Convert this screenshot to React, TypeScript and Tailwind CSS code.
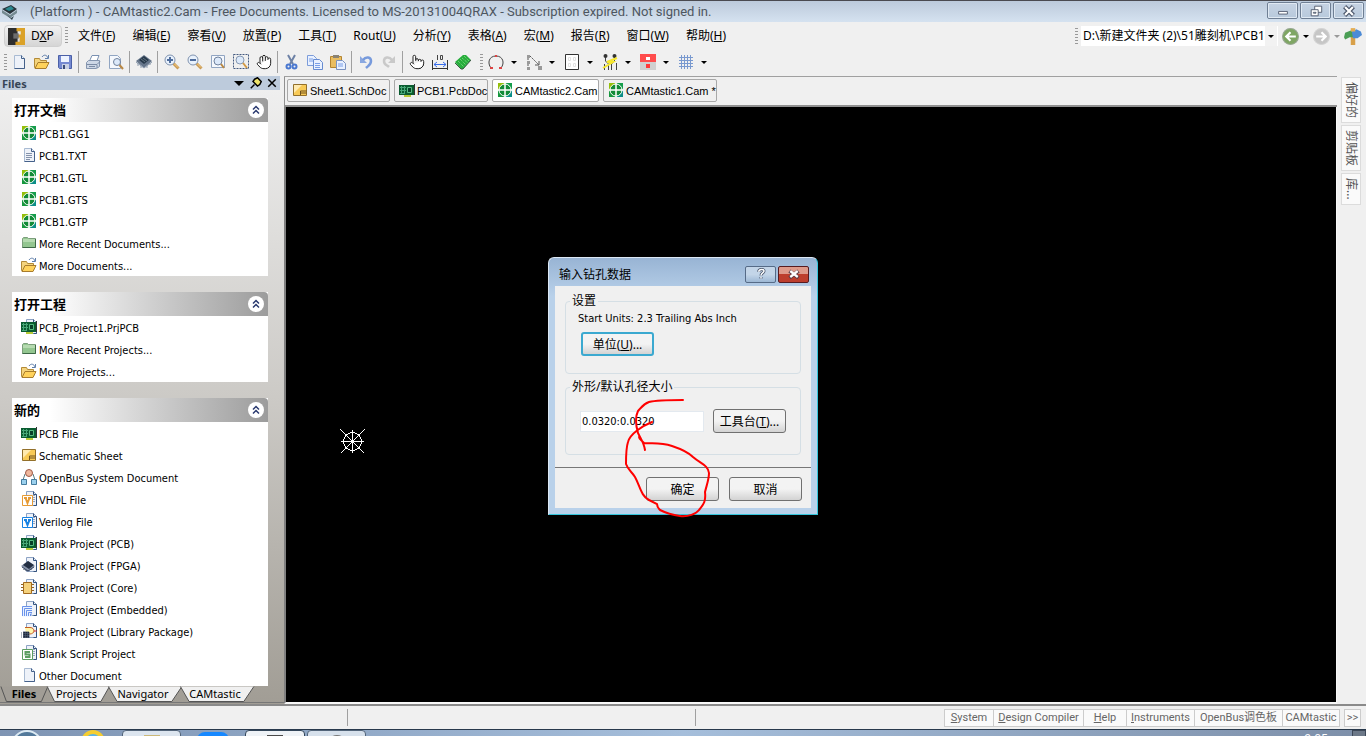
import type { ReactNode } from "react";
import { Hand, Pointer } from "lucide-react";

const ui = "font-['Noto_Sans','Noto_Sans_CJK_SC',sans-serif]";
const tahoma = "font-['DejaVu_Sans_Condensed','Noto_Sans_CJK_SC',sans-serif]";
const arial = "font-['Liberation_Sans','Noto_Sans_CJK_SC',sans-serif]";

const Svg = ({ children, className = "w-4 h-4" }: { children: ReactNode; className?: string }) => (
  <svg viewBox="0 0 16 16" className={`${className} shrink-0`} fill="none" aria-hidden="true">
    {children}
  </svg>
);

const Page = ({ lines = false }: { lines?: boolean }) => (
  <>
    <path d="M3.5 1.5h7l3 3v10h-10z" fill="#eef2f9" stroke="#a9bbd3" />
    <path d="M10.5 1.5v3h3v10h-10" stroke="#45618a" />
    {lines && <path d="M5 6.5h6M5 8.5h6M5 10.5h6M5 12.5h4" stroke="#8492ab" />}
  </>
);

const BackPage = () => (
  <>
    <path d="M5.5.5h7l3 3v11h-10z" fill="#eef2f9" stroke="#8da3c4" />
    <path d="M12.5.5v3h3v11h-3" stroke="#34537e" />
  </>
);

const Board = () => (
  <>
    <path d="M0 3h15v10H0z" fill="#0a5c30" />
    <path d="M5 13h7v2H5z" fill="#b5c936" />
    <path d="M1 5.500h6M1 8.500h6M1 11.500h5M2.500 4v8M5.500 4v8" stroke="#48a878" />
    <path d="M8.500 5.500h4v5h-4z" fill="#083f28" stroke="#56ba80" />
    <path d="M15.500 2v11" stroke="#333" />
  </>
);

const Lens = ({ sign }: { sign?: string }) => (
  <>
    <path d="M9.500 9.500l5 5" stroke="#c99a55" strokeWidth="3" />
    <path d="M10 9.500l4 4" stroke="#f7cf83" />
    <circle cx="6" cy="6" r="5" fill="#e8f1fc" stroke="#8093af" />
    {sign && <path d={sign} stroke="#4f6d9d" strokeWidth="2" />}
  </>
);

const Folder = () => (
  <>
    <path d="M.5 13.500v-9h5l1 2h6v7z" fill="#f5d47c" stroke="#b28a38" />
    <path d="M1 14.500l3-6h11l-3 6z" fill="#ffd25b" stroke="#a87c2c" />
    <path d="M8 3c2-3 5-2 6 1M14.500 1v3.500H11" stroke="#5e7eaa" />
  </>
);

const FrontBadge = ({ color, d }: { color: string; d: string }) => (
  <>
    <BackPage />
    <path d="M12 4.500h2M12 6.500h2M12 8.500h2M12 10.500h2" stroke="#96a5be" />
    <path d="M1.500 4.500h10v10h-10z" fill="#fff" stroke={color} />
    <path d={d} stroke={color} strokeWidth="2" />
  </>
);

const icons: Record<string, ReactNode> = {
  cam: (
    <>
      <path d="M1 1h7v7H1z" fill="#94bf0b" />
      <path d="M8 1h7v7H8z" fill="#159d4b" />
      <path d="M1 8h7v7H1z" fill="#16983e" />
      <path d="M8 8h7v7H8z" fill="#0b8e87" />
      <circle cx="8" cy="8" r="6" fill="#128b37" stroke="#fff" />
      <path d="M8 1v14M1 8h14" stroke="#fff" strokeWidth="1.500" />
    </>
  ),
  page: <Page />,
  text: <Page lines />,
  green: (
    <>
      <path d="M1.500 12.500v-9l1-1h4l1 1h7v9z" fill="#93c690" stroke="#7c9f7c" />
      <path d="M14.500 4v8.500h-13" stroke="#3e6946" />
      <path d="M2 4h12v3H2z" fill="#b5dab0" />
    </>
  ),
  folder: <Folder />,
  board: <Board />,
  boardPage: (
    <>
      <BackPage />
      <Board />
    </>
  ),
  sheet: (
    <>
      <path d="M1.500 2.500h13v11h-13z" fill="#f8ca56" stroke="#93702b" />
      <path d="M2 3h8L2 11z" fill="#ffeab0" />
      <path d="M8.500 13v-4h6M8.500 11h6" stroke="#6f511e" />
    </>
  ),
  bus: (
    <>
      <path d="M4 5L2 11M12 5l2 6M6 4h4" stroke="#547c83" />
      <circle cx="8" cy="4" r="3.500" fill="#efb79d" stroke="#9f5944" />
      <path d="M.5 10.500h5v5h-5zM10.500 10.500h5v5h-5z" fill="#9bd0ed" stroke="#447b9d" />
    </>
  ),
  vhdl: <FrontBadge color="#e69b35" d="M3 7h3M7 7h3M4.500 7l2 5 2-5" />,
  verilog: <FrontBadge color="#1682e3" d="M3 7h3M7 7h3M4.500 7l2 5 2-5" />,
  script: <FrontBadge color="#5d9e62" d="M9 7H4.500v2.500h4V12H4" />,
  fpga: (
    <>
      <BackPage />
      <path d="M0 9l7-5 7 5-7 6z" fill="#8793a9" />
      <path d="M2 8l5-4 6 4-5 4z" fill="#232f43" />
      <path d="M1 10l6 4 6-4M3 12v1M5 13v1M10 12v1" stroke="#34445f" />
    </>
  ),
  core: (
    <>
      <BackPage />
      <path d="M0 5.500h13M0 8.500h13M0 11.500h13" stroke="#8f6423" />
      <path d="M2.500 3.500h8v11h-8z" fill="#f5d27c" stroke="#a36a1e" />
    </>
  ),
  embedded: (
    <>
      <BackPage />
      <path d="M1.500 5.500h9v10h-9z" fill="#e9f2ff" />
      <path d="M1.500 15V5.500H11M3.500 15V7.500H11M5.500 15V9.500H11M7.500 15v-3.500H11M9.500 15v-2H11" stroke="#6b93ea" />
    </>
  ),
  library: (
    <>
      <BackPage />
      <path d="M4 4.500h5c3 0 4 2 4 3.500s-2 3-4 3H5" fill="#fff5ad" stroke="#c65e23" />
      <path d="M13 8h3" stroke="#c33" />
      <path d="M2 9h6v6H2z" fill="#1e293b" />
      <path d="M0 10h10M0 12h10M0 14h10M3 8v8M5 8v8M7 8v8" stroke="#57647a" strokeDasharray="1 1" />
    </>
  ),
  save: (
    <>
      <path d="M1.500 1.500h13v13h-12l-1-1z" fill="#7589d1" stroke="#4b60a7" />
      <path d="M4 2h8v6H4z" fill="#edf3ff" />
      <path d="M5 10h7v5H5z" fill="#c8d0e4" />
      <path d="M6 11h2v4H6z" fill="#394b78" />
    </>
  ),
  print: (
    <>
      <path d="M4.500 7L7 1.500h7L11.500 8" fill="#fff" stroke="#7a91b2" />
      <path d="M1.500 8.500l2-2h11v6l-3 2h-10z" fill="#cdd7e6" stroke="#8394ae" />
      <path d="M2 10.500h10l3-3M4 12.500h6M12 11v3" stroke="#7b8ba5" />
    </>
  ),
  preview: (
    <>
      <path d="M1.500 1.500h8l3 3v10h-11z" fill="#f5f8fd" stroke="#91a5c2" />
      <circle cx="9" cy="8" r="3.500" fill="#dce9fa" stroke="#70829d" />
      <path d="M11.500 11l3.500 4" stroke="#b98844" strokeWidth="2" />
    </>
  ),
  chip: (
    <>
      <path d="M0 7l8-6 8 6-8 7z" fill="#65758a" />
      <path d="M3 6l5-4 5 4-5 4z" fill="#26384a" />
      <path d="M0 8l8 6 8-6M2 9v3M5 11v3M11 12v2M14 9v2" stroke="#8c9bae" />
      <path d="M5 5l4 3M7 4l4 3" stroke="#60727f" />
    </>
  ),
  zoomIn: <Lens sign="M3 6h6M6 3v6" />,
  zoomOut: <Lens sign="M3 6h6" />,
  zoomPage: (
    <>
      <path d="M1.500 1.500h13v12h-13z" fill="#f5f8fd" stroke="#91a5c2" />
      <circle cx="8" cy="7" r="4" fill="#dce9fa" stroke="#70829d" />
      <path d="M11 10l3 4" stroke="#b98844" strokeWidth="2" />
    </>
  ),
  zoomArea: (
    <>
      <path d="M.5.5h15v14H.5z" stroke="#445a80" strokeDasharray="2 1" />
      <circle cx="7" cy="6" r="4" fill="#dce9fa" stroke="#8799b3" />
      <path d="M10 9l4 5" stroke="#d49b45" strokeWidth="2" />
    </>
  ),
  cut: (
    <>
      <path d="M4 1l5 9M11 1L6 10" stroke="#6e82a6" strokeWidth="2" />
      <circle cx="4.500" cy="12.500" r="2" stroke="#4a78d0" strokeWidth="2" />
      <circle cx="10.500" cy="12.500" r="2" stroke="#4a78d0" strokeWidth="2" />
    </>
  ),
  copy: (
    <>
      <path d="M.5 1.500h6l3 3v7h-9z" fill="#e9f1ff" stroke="#7c9cda" />
      <path d="M6.500 5.500h6l3 3v7h-9z" fill="#e9f1ff" stroke="#668bd0" />
      <path d="M2 5h4M2 7h4M8 9.500h5M8 11.500h5M8 13.500h5" stroke="#7a9fe8" />
    </>
  ),
  paste: (
    <>
      <path d="M.5 2.500h11v11H.5z" fill="#e9bd61" stroke="#b48531" />
      <path d="M3 1h6v3H3z" fill="#8a8374" />
      <path d="M6.500 6.500h6l3 3v6h-9z" fill="#e9f1ff" stroke="#7a92c0" />
      <path d="M8 10h5M8 12h5" stroke="#7a9fe8" />
    </>
  ),
  undo: (
    <>
      <path d="M2 2v7h7z" fill="#8aa8e0" />
      <path d="M5 6c3-4 8-3 8 1 0 4-3 5-5 7" stroke="#779adc" strokeWidth="2.500" />
    </>
  ),
  redo: (
    <>
      <path d="M14 2v7H7z" fill="#c9c9c9" />
      <path d="M11 6C8 2 3 3 3 7c0 4 3 4 5 6" stroke="#c9c9c9" strokeWidth="2.500" />
    </>
  ),
  measure: (
    <>
      <path d="M.5 6v10M15.500 6v10M.5 14.500h15" stroke="#333" />
      <path d="M2 10.500h12M5 8l-3 2.500L5 13M11 8l3 2.500L11 13" stroke="#376ceb" />
      <path d="M5.500 1v5M8.500 1.500h2v4h-2z" stroke="#444" />
    </>
  ),
  pad: (
    <>
      <path d="M0 8l8-7h3l5 5-8 9H6z" fill="#27ad3c" />
      <path d="M0 9l6 6h2l8-9" stroke="#3c5a44" />
      <path d="M3 7l6 6M5 5l6 6M7 4l6 5M9 2l5 5" stroke="#8be08b" strokeDasharray="1 1" />
    </>
  ),
  arc: (
    <>
      <path d="M3 14C-1 9 1 2 8 2s9 7 5 12" stroke="#444" />
      <path d="M2 13h3v2H2zM11 13h3v2h-3zM7 1h2v2H7z" fill="#d44" />
    </>
  ),
  nodes: (
    <>
      <path d="M2 4v9M4 2l9 9" stroke="#555" strokeDasharray="2 1" />
      <path d="M13 7v4H9" stroke="#555" />
      <path d="M1 1h3v3H1zM1 7h3v3H1zM1 13h3v3H1zM12 12h4v4h-4z" fill="#999" />
    </>
  ),
  array: (
    <>
      <path d="M1.500.5h13v15h-13z" fill="#fff" stroke="#333" />
      <path d="M4.500 3.500h2v3h-2zM9.500 3.500h2v3h-2zM4.500 9.500h2v3h-2zM9.500 9.500h2v3h-2z" stroke="#e2e2e2" />
    </>
  ),
  route: (
    <>
      <path d="M3.500 2v5l3 3v6M12.500 2v5l-3 3v6M14.500 9v7M2.500 10v6" stroke="#444" />
      <circle cx="3.500" cy="2" r="2" fill="#333" />
      <circle cx="12.500" cy="2" r="2" fill="#333" />
      <path d="M15 4L5 8h6L1 14" stroke="#f6e72d" strokeWidth="2" />
    </>
  ),
  layer: (
    <>
      <path d="M0 0h16v8H0z" fill="#ff4d4d" />
      <path d="M0 8h16v8H0z" fill="#d0d0d0" />
      <path d="M6 3h4v3H6z" fill="#fff" />
      <path d="M6 10h4v4H6z" fill="#ff3838" />
    </>
  ),
  grid: <path d="M3.500 1v14M6.500 1v14M9.500 1v14M12.500 1v14M1 3.500h14M1 6.500h14M1 9.500h14M1 12.500h14" stroke="#7999cf" />,
};

const Icon = ({ name }: { name: string }) => {
  if (name === "hand") return <Hand strokeWidth={1.5} className="h-4 w-4 fill-white text-[#222]" />;
  if (name === "point") return <Pointer strokeWidth={1.5} className="h-4 w-4 fill-white text-[#222]" />;
  return <Svg>{icons[name]}</Svg>;
};

const Arrow = ({ className = "border-t-black" }: { className?: string }) => (
  <span className={`border-x-3 border-t-3 border-x-transparent ${className}`} />
);

const Grip = ({ className = "" }: { className?: string }) => (
  <span
    className={`w-[3px] shrink-0 bg-[repeating-linear-gradient(#999_0_1px,transparent_1px_3px)] ${className}`}
  />
);

const menus = [
  ["文件", "F"],
  ["编辑", "E"],
  ["察看", "V"],
  ["放置", "P"],
  ["工具", "T"],
  ["Rout", "U"],
  ["分析", "Y"],
  ["表格", "A"],
  ["宏", "M"],
  ["报告", "R"],
  ["窗口", "W"],
  ["帮助", "H"],
];

const toolGroups = [
  ["page", "folder", "save"],
  ["print", "preview"],
  ["chip"],
  ["zoomIn", "zoomOut", "zoomPage", "zoomArea", "hand"],
  ["cut", "copy", "paste"],
  ["undo", "redo"],
  ["point", "measure", "pad"],
];

const dropTools = ["arc", "nodes", "array", "route", "layer", "grid"];

const sections = [
  {
    title: "打开文档",
    items: [
      ["cam", "PCB1.GG1"],
      ["text", "PCB1.TXT"],
      ["cam", "PCB1.GTL"],
      ["cam", "PCB1.GTS"],
      ["cam", "PCB1.GTP"],
      ["green", "More Recent Documents..."],
      ["folder", "More Documents..."],
    ],
  },
  {
    title: "打开工程",
    items: [
      ["boardPage", "PCB_Project1.PrjPCB"],
      ["green", "More Recent Projects..."],
      ["folder", "More Projects..."],
    ],
  },
  {
    title: "新的",
    items: [
      ["board", "PCB File"],
      ["sheet", "Schematic Sheet"],
      ["bus", "OpenBus System Document"],
      ["vhdl", "VHDL File"],
      ["verilog", "Verilog File"],
      ["boardPage", "Blank Project (PCB)"],
      ["fpga", "Blank Project (FPGA)"],
      ["core", "Blank Project (Core)"],
      ["embedded", "Blank Project (Embedded)"],
      ["library", "Blank Project (Library Package)"],
      ["script", "Blank Script Project"],
      ["page", "Other Document"],
    ],
  },
];

const docTabs = [
  ["sheet", "Sheet1.SchDoc", "w-[103px]"],
  ["board", "PCB1.PcbDoc", "w-[94px]"],
  ["cam", "CAMtastic2.Cam", "w-[107px]"],
  ["cam", "CAMtastic1.Cam *", "w-[114px]"],
];

const statusButtons = [
  ["S", "ystem", "w-[50px]"],
  ["D", "esign Compiler", "w-[91px]"],
  ["H", "elp", "w-[44px]"],
  ["I", "nstruments", "w-[69px]"],
  ["", "OpenBus调色板", "w-[89px]"],
  ["", "CAMtastic", "w-[58px]"],
];

const TitleBar = () => (
  <header className="flex h-[22px] shrink-0 items-center border-t border-[#4a4a50] bg-linear-to-b from-[#bccadb] to-[#d5e2f0] pr-0.5 pl-0.5">
    <Svg>
      <path d="M0 5l9-4 6 4-7 5z" fill="#28333a" />
      <path d="M3 5l6-3 3 3-5 2z" fill="#2b8990" />
      <path d="M0 6l8 5 7-5v3l-7 5-8-5z" fill="#758a91" />
      <path d="M5 11l4 3 3-2-2 4z" fill="#30424b" />
    </Svg>
    <h1 className="ml-3 grow text-[13px] leading-5 text-[#4d5660] font-['Roboto',sans-serif]">
      (Platform ) - CAMtastic2.Cam - Free Documents. Licensed to MS-20131004QRAX - Subscription expired. Not signed in.
    </h1>
    <div className="flex gap-0.5 self-start pt-px">
      {["minimize", "restore", "close"].map((name) => (
        <button
          key={name}
          aria-label={name}
          className="flex h-[17px] w-[31px] items-center justify-center rounded-[2px] border border-[#6f7f94] bg-linear-to-b from-[#c6d3e3] to-[#b8c9dc] outline outline-offset-[-2px] outline-[#e0e9f3]"
        >
          <Svg className="h-3.5 w-3.5">
            {name === "minimize" && <path d="M3 8.500h10v3H3z" fill="#fff" stroke="#4b5569" />}
            {name === "restore" && (
              <>
                <path d="M6.500 2.500h8v7h-8z" fill="#fff" stroke="#4b5569" />
                <path d="M2.500 6.500h8v7h-8z" fill="#fff" stroke="#4b5569" />
                <path d="M5 9.500h3v1H5z" stroke="#4b5569" />
              </>
            )}
            {name === "close" && (
              <>
                <path d="M3 3l10 10M13 3L3 13" stroke="#4b5569" strokeWidth="5" />
                <path d="M3.500 3.500l9 9M12.500 3.500l-9 9" stroke="#fff" strokeWidth="2.500" />
              </>
            )}
          </Svg>
        </button>
      ))}
    </div>
  </header>
);

const MenuBar = () => (
  <nav className={`flex h-[26px] shrink-0 items-center pt-0.5 pl-1 text-[12px] text-black ${ui}`}>
    <button className="flex h-[22px] w-[58px] items-center gap-1.5 rounded-sm border border-[#d0d0d0] bg-linear-to-b from-[#f2f2f2] to-[#d5d5d5] pl-[3px]">
      <Svg className="h-[17px] w-[17px]">
        <path d="M0 0h9v16H0z" fill="#2e2e2e" />
        <path d="M8 0h8v16H7v-3h4V9H9V6h3V3H8z" fill="#dba228" />
        <path d="M5 5h5v5H5z" fill="#6d6d6d" />
      </Svg>
      <span>
        D<u>X</u>P
      </span>
    </button>
    <Grip className="ml-[3px] h-[18px]" />
    <div className="ml-[10px] flex grow gap-[17px]">
      {menus.map(([label, key]) => (
        <button key={key} className="whitespace-nowrap">
          {label}(<u>{key}</u>)
        </button>
      ))}
    </div>
    <Grip className="h-[17px]" />
    <div className="ml-[3px] flex h-5 w-[197px] items-center bg-white">
      <input
        aria-label="Path"
        className="w-[184px] min-w-0 bg-transparent pl-0.5 outline-none"
        defaultValue="D:\新建文件夹 (2)\51雕刻机\PCB1.GG1"
      />
      <button aria-label="Path list" className="flex h-full w-3 items-center justify-center bg-[#f2f2f2]">
        <Arrow />
      </button>
    </div>
    <div className="flex items-center pr-1 pl-1">
      <button aria-label="Back" className="flex items-center gap-1">
        <Svg className="h-[17px] w-[17px]">
          <circle cx="8" cy="8" r="7.500" fill="#7fa664" stroke="#9aa895" />
          <path d="M13 8H5M8 4L4 8l4 4" stroke="#fff" strokeWidth="2" />
        </Svg>
        <Arrow />
      </button>
      <button aria-label="Forward" className="ml-1 flex items-center gap-1">
        <Svg className="h-[17px] w-[17px]">
          <circle cx="8" cy="8" r="7.500" fill="#c6c6c6" stroke="#d4d4d4" />
          <path d="M3 8h8M8 4l4 4-4 4" stroke="#fff" strokeWidth="2" />
        </Svg>
        <Arrow className="border-t-[#999]" />
      </button>
      <button aria-label="Home" className="ml-1">
        <Svg className="h-[18px] w-[18px]">
          <path d="M6 6h4v10H6z" fill="#d8a049" />
          <path d="M0 9l1-4 5-2 3 2v4H5L1 11z" fill="#4b9e55" />
          <path d="M7 4l4-2 4 2 1 3-4 3H8z" fill="#4d8bd6" />
          <path d="M6 1h4v3H6z" fill="#e4ad53" />
        </Svg>
      </button>
    </div>
  </nav>
);

const ToolBar = () => (
  <div className="flex h-7 shrink-0 items-center pl-1">
    <Grip className="h-[17px]" />
    {toolGroups.map((group, i) => (
      <div key={group[0]} className="flex items-center">
        {i > 0 && <span className="mx-0.5 h-[22px] w-px bg-[#a0a0a0]" />}
        {group.map((name) => (
          <button key={name} aria-label={name} className="flex w-[23px] justify-center">
            <Icon name={name} />
          </button>
        ))}
      </div>
    ))}
    <Grip className="mr-0.5 ml-1.5 h-[17px]" />
    {dropTools.map((name) => (
      <button key={name} aria-label={name} className="flex w-[38px] items-center pl-[3px]">
        <Icon name={name} />
        <span className="flex w-5 justify-center">
          <Arrow />
        </span>
      </button>
    ))}
  </div>
);

const FilesPanel = () => (
  <aside className={`flex w-[284px] shrink-0 flex-col text-[11px] text-black ${tahoma}`}>
    <div className="flex h-3.5 w-[280px] items-center bg-[#bdcbdc] pr-0.5 pl-0.5">
      <h2 className={`grow pt-0.5 leading-3 font-bold text-[#364556] ${ui}`}>Files</h2>
      <button aria-label="Panel menu" className="mr-1.5">
        <span className="block border-x-5 border-t-5 border-x-transparent border-t-black" />
      </button>
      <button aria-label="Pin" className="mr-1">
        <Svg className="h-3 w-3">
          <path d="M6 3l4-2 5 5-2 4-3 2-6-6z" fill="#eee36a" stroke="#000" strokeWidth="2" />
          <path d="M6 10l-5 5" stroke="#000" strokeWidth="2" />
        </Svg>
      </button>
      <button aria-label="Close panel">
        <Svg className="h-3 w-3">
          <path d="M3 3l10 10M13 3L3 13" stroke="#000" strokeWidth="2" />
        </Svg>
      </button>
    </div>
    <div className="flex grow flex-col bg-linear-to-b from-[#efefef] via-[#cccac6] to-[#a19d95]">
      <div className="flex flex-col gap-4 pt-2 pr-4 pl-3">
        {sections.map((section) => (
          <section key={section.title} className="bg-white">
            <div className="flex h-6 items-center justify-between rounded-t-sm bg-linear-to-r from-white from-15% to-[#9c9c9c] pr-1 pl-0.5">
              <h3 className="pt-0.5 text-[13px] font-bold">{section.title}</h3>
              <button aria-label="Collapse" className="rounded-full bg-white">
                <Svg>
                  <path d="M5 7.500l3-3 3 3M5 11.500l3-3 3 3" stroke="#29396f" strokeWidth="1.500" />
                </Svg>
              </button>
            </div>
            <ul>
              {section.items.map(([icon, label]) => (
                <li key={label} className="flex h-[22px] items-center gap-0.5 pl-[9px]">
                  <Icon name={icon} />
                  <a href="#" className="pt-1 leading-4">
                    {label}
                  </a>
                </li>
              ))}
            </ul>
          </section>
        ))}
      </div>
      <div className={`flex h-4 ${ui}`}>
        {["Files", "Projects", "Navigator", "CAMtastic"].map((label, i) => (
          <PanelTab key={label} label={label} index={i} />
        ))}
      </div>
      <div className="h-px bg-[#777]" />
    </div>
  </aside>
);

const tabWidths = ["w-[46px]", "w-[61px]", "w-[72px]", "w-[72px]"];

const PanelTab = ({ label, index }: { label: string; index: number }) => (
  <button className={`relative h-4 ${tabWidths[index]}`}>
    <svg viewBox="0 0 100 16" preserveAspectRatio="none" className="absolute inset-0 h-full w-full overflow-visible">
      <path
        d="M2 .5L14 15.500H90L104 .5"
        fill={index === 0 ? "#a19d96" : "#f0f0f0"}
        stroke="#555"
        vectorEffect="non-scaling-stroke"
      />
    </svg>
    <span className={`relative block leading-4 ${index === 0 ? "pl-0.5 font-bold" : ""}`}>{label}</span>
  </button>
);

const dialogButton =
  "h-6 w-[73px] rounded-[3px] border border-[#707070] bg-linear-to-b from-[#f3f3f3] from-50% to-[#d3d3d3] pt-0.5 text-[12px] leading-5";

const DrillDialog = () => (
  <div
    role="dialog"
    aria-labelledby="dialog-title"
    className={`absolute top-[257px] left-1/2 w-[270px] -translate-x-1/2 rounded-t-md border border-t-[#dce8f5] border-r-[#35c6dc] border-b-[#35c6dc] border-l-[#dce8f5] bg-linear-to-b from-[#98b4d4] to-[#b9d1ea] to-15% px-1.5 pb-1.5 text-black ${ui}`}
  >
    <div className="flex h-7 items-center">
      <h2 id="dialog-title" className="grow pt-1.5 pl-1 text-[12px]">
        输入钻孔数据
      </h2>
      <button
        aria-label="Help"
        className="mt-1 mr-0.5 flex h-[17px] w-[31px] items-center justify-center rounded-[2px] border border-[#566b87] bg-linear-to-b from-[#c3d5e8] from-50% to-[#9db8d5]"
      >
        <Svg className="h-3 w-3">
          <path d="M5 5c0-4 7-4 7-1 0 3-4 2-4 6M8 12v2" stroke="#46536a" strokeWidth="4" />
          <path d="M5 5c0-4 7-4 7-1 0 3-4 2-4 6M8 12v2" stroke="#fff" strokeWidth="2" />
        </Svg>
      </button>
      <button
        aria-label="Close"
        className="mt-1 mr-0.5 flex h-[17px] w-[31px] items-center justify-center rounded-[2px] border border-[#571b20] bg-linear-to-b from-[#de9a8b] from-45% to-[#bd3e2d] to-50%"
      >
        <Svg className="h-3 w-3">
          <path d="M2 4l12 9M14 4L2 13" stroke="#5c3b45" strokeWidth="5" />
          <path d="M3 4l10 8M13 4L3 12" stroke="#fff" strokeWidth="3" />
        </Svg>
      </button>
    </div>
    <div className="bg-[#f0f0f0]">
      <div className="px-2.5 pt-[7px]">
        <fieldset className="h-[81px] rounded-sm border border-[#d5dfe5] pl-3">
          <legend className="-ml-2 px-0.5 text-[12px] leading-4">设置</legend>
          <p className={`pt-0.5 text-[11px] leading-4 ${tahoma}`}>Start Units: 2.3 Trailing Abs Inch</p>
          <button className="mt-[5px] ml-[3px] h-6 w-[73px] rounded-[3px] border-2 border-[#3ba9d0] bg-linear-to-b from-[#f3f3f3] from-50% to-[#d3d3d3] pt-0.5 text-[12px] leading-4">
            单位(<u>U</u>)...
          </button>
        </fieldset>
        <fieldset className="mt-[5px] h-[76px] rounded-sm border border-[#d5dfe5] pl-3">
          <legend className="-ml-2 px-0.5 text-[12px] leading-4">外形/默认孔径大小</legend>
          <div className="flex items-center gap-[9px] pt-3.5 pl-0.5">
            <input
              aria-label="外形/默认孔径大小"
              defaultValue="0.0320:0.0320"
              className={`h-[21px] w-[124px] border border-[#e3e9ef] bg-white pl-px text-[11px] outline-none ${tahoma}`}
            />
            <button className={dialogButton}>
              工具台(<u>T</u>)...
            </button>
          </div>
        </fieldset>
      </div>
      <div className="mt-3 flex justify-end gap-2.5 border-t border-[#777] pt-[9px] pr-[9px] pb-[7px]">
        <button className={dialogButton}>确定</button>
        <button className={dialogButton}>取消</button>
      </div>
    </div>
    <svg viewBox="0 0 270 262" className="pointer-events-none absolute top-0 left-0 h-[262px] w-[270px]" fill="none">
      <path
        d="M134 142C120 142 108 142 100 144 94 146 92 150 89 153 86 159 87 168 89 175 92 181 95 185 96 192M103 164C93 168 81 176 79 184 77 190 77 199 77 206 79 212 83 214 86 219 91 228 92 238 100 242L108 246C108 249 109 250 111 252 117 255 124 257 131 258 139 259 147 256 150 252 155 246 157 243 156 234 158 226 160 221 160 215 159 207 152 206 144 199 138 193 129 190 123 188 111 184 103 186 95 185 92 182 90 181 90 179"
        stroke="#f00"
        strokeWidth="2"
        strokeLinecap="round"
      />
    </svg>
  </div>
);

const Workspace = () => (
  <main className="flex min-w-0 grow flex-col border-t border-[#a0a0a0]">
    <div className={`flex h-[30px] items-center gap-1 border-b-2 border-l border-[#909090] pb-0.5 pl-0.5 text-[11px] text-black ${arial}`}>
      {docTabs.map(([icon, label, width]) => (
        <button
          key={label}
          className={`flex h-[23px] shrink-0 items-center gap-0.5 rounded-[2px] border border-[#a8a8a8] pl-1 whitespace-nowrap ${width} ${
            label === "CAMtastic2.Cam" ? "bg-white" : "bg-[#f0f0f0]"
          }`}
        >
          <Icon name={icon} />
          <span className="pt-0.5">{label}</span>
        </button>
      ))}
    </div>
    <div className="grow border-r border-b-2 border-l-2 border-[#f8f8f8] border-l-[#808080] bg-black pt-[322px] pl-[54px]">
      <svg viewBox="0 0 25 25" className="h-[25px] w-[25px]" fill="none" stroke="#fff" shapeRendering="crispEdges">
        <circle cx="12.500" cy="12.500" r="9" />
        <path d="M12.500 1v23M1 12.500h23M.5.5l24 24M24.500.5l-24 24" />
      </svg>
    </div>
  </main>
);

const SideTabs = () => (
  <div className={`flex w-[29px] shrink-0 flex-col items-start gap-0.5 pt-px pl-1 text-[12px] text-[#555] ${ui}`}>
    {["偏好的", "剪贴板", "库..."].map((label) => (
      <button
        key={label}
        className="w-5 border border-[#dcdcdc] bg-[#fafafa] pt-1 pb-1 leading-[18px] [text-orientation:sideways] [writing-mode:vertical-rl]"
      >
        {label}
      </button>
    ))}
  </div>
);

const StatusBar = () => (
  <footer className="flex h-[25px] shrink-0 items-center border-t-2 border-[#8a8a8a] pr-[5px] text-[11px] text-[#666] font-['Roboto','Noto_Sans_CJK_SC',sans-serif]">
    <span className="ml-[347px] h-[17px] w-px bg-[#a0a0a0]" />
    <span className="ml-[347px] h-[17px] w-px bg-[#a0a0a0]" />
    <div className="flex grow justify-end">
      {statusButtons.map(([key, rest, width]) => (
        <button
          key={rest}
          className={`-mr-px h-[18px] border border-[#ccc] bg-[#fafafa] leading-4 whitespace-nowrap ${width}`}
        >
          {key && <u>{key}</u>}
          {rest}
        </button>
      ))}
      <button className="ml-[5px] h-[18px] w-[17px] border border-[#ccc] bg-[#fafafa] leading-4">&gt;&gt;</button>
    </div>
  </footer>
);

const TaskBar = () => (
  <div className="flex h-[7px] shrink-0 overflow-hidden border-t border-[#28394c] bg-linear-to-r from-[#7e94b3] via-[#a5bedb] to-[#7d8fa9]">
    <button aria-label="Start" className="ml-[11px] h-8 w-8 rounded-full border-2 border-[#dceaf3] bg-[#53799b]" />
    <button aria-label="Browser" className="ml-[38px] h-8 w-6 rounded-full border-4 border-[#f5cd31] bg-[#5bb3e8]" />
    <button aria-label="Folder" className="ml-[17px] flex h-8 w-[59px] justify-center rounded-sm border border-[#53657a] bg-[#dce5ef] pt-1">
      <span className="h-4 w-4 bg-[#cbb878]" />
    </button>
    <button aria-label="Messages" className="mt-0.5 ml-[16px] h-8 w-8 rounded-lg bg-[#1688ff]" />
    <button aria-label="Designer" className="ml-[16px] flex h-8 w-[60px] justify-center rounded-sm border border-[#33465a] bg-[#eff3f7] pt-1">
      <span className="h-4 w-4 bg-[#4a4a4a]" />
    </button>
    <button aria-label="Player" className="ml-0.5 flex h-8 w-[59px] justify-center rounded-sm border border-[#53657a] bg-[#d7e1ec] pt-1">
      <span className="h-5 w-5 rounded-full border-2 border-[#777] bg-[#4572c4]" />
    </button>
    <time className={`mr-6 ml-auto pt-px text-[12px] leading-4 text-white ${ui}`}>9:05</time>
    <button aria-label="Show desktop" className="h-8 w-3.5 border border-[#3c4858] bg-[#6c7888]" />
  </div>
);

const App = () => {
  return (
    <div className="flex h-screen flex-col overflow-hidden bg-[#f0f0f0]">
      <TitleBar />
      <MenuBar />
      <ToolBar />
      <div className="flex min-h-0 grow">
        <FilesPanel />
        <Workspace />
        <SideTabs />
      </div>
      <StatusBar />
      <TaskBar />
      <DrillDialog />
    </div>
  );
};

export default App;
